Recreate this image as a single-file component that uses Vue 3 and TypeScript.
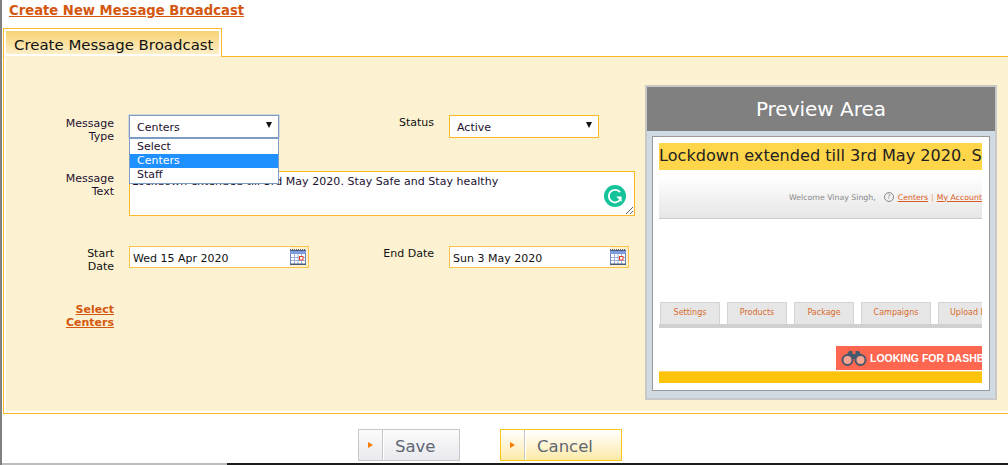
<script setup lang="ts">
const options: string[] = ['Select', 'Centers', 'Staff']
const previewTabs: string[] = ['Settings', 'Products', 'Package', 'Campaigns', 'Upload D']
</script>

<template>
  <div class="page">
    <a class="heading">Create New Message Broadcast</a>
    <div class="tabs">
      <div class="tab">Create Message Broadcast</div>
    </div>
    <section class="panel">
      <div class="form">
        <div class="label row1">Message<br />Type</div>
        <div class="field-wrap">
          <div class="select focus">
            <span>Centers</span>
            <i class="arrow"></i>
          </div>
          <ul class="dropdown">
            <li v-for="o in options" :key="o" :class="{ selected: o === 'Centers' }">{{ o }}</li>
          </ul>
        </div>
        <div class="label status">Status</div>
        <div class="select amber">
          <span>Active</span>
          <i class="arrow"></i>
        </div>

        <div class="label row2">Message<br />Text</div>
        <div class="text-wrap">
          <textarea class="message" readonly>Lockdown extended till 3rd May 2020. Stay Safe and Stay healthy</textarea>
          <svg class="grammarly" viewBox="0 0 22 22" width="22" height="22">
            <circle cx="11" cy="11" r="11" fill="#15c39a" />
            <path d="M16 7.2A6.3 6.3 0 1 0 16.2 14.8" fill="none" stroke="#fff" stroke-width="1.9" />
            <path d="M12.2 11.6h5.4v5.4z" fill="#fff" />
          </svg>
        </div>

        <div class="label row3">Start<br />Date</div>
        <div class="date">
          <span class="date-text">Wed 15 Apr 2020</span>
          <svg class="cal" viewBox="0 0 16 16" width="16" height="16">
            <rect x="0" y="2" width="16" height="14" fill="#fff" />
            <path d="M0 0.5h16" stroke="#555e70" stroke-dasharray="1 1" />
            <rect x="0" y="1" width="16" height="1" fill="#4d5a75" />
            <rect x="0" y="2" width="16" height="3" fill="#7d9be0" />
            <path d="M0.5 5v11M15.5 5v11" stroke="#6f86b8" />
            <path d="M1 8.5h14M1 11.5h14M4.5 5v10M8 5v10M11.5 5v10" stroke="#9db0d6" />
            <rect x="0" y="14.5" width="16" height="1.5" fill="#4d5a75" />
            <rect x="9.5" y="7.5" width="3.5" height="3.5" fill="#fff" stroke="#e2432d" />
          </svg>
        </div>
        <div class="label status row3b">End Date</div>
        <div class="date">
          <span class="date-text">Sun 3 May 2020</span>
          <svg class="cal" viewBox="0 0 16 16" width="16" height="16">
            <rect x="0" y="2" width="16" height="14" fill="#fff" />
            <path d="M0 0.5h16" stroke="#555e70" stroke-dasharray="1 1" />
            <rect x="0" y="1" width="16" height="1" fill="#4d5a75" />
            <rect x="0" y="2" width="16" height="3" fill="#7d9be0" />
            <path d="M0.5 5v11M15.5 5v11" stroke="#6f86b8" />
            <path d="M1 8.5h14M1 11.5h14M4.5 5v10M8 5v10M11.5 5v10" stroke="#9db0d6" />
            <rect x="0" y="14.5" width="16" height="1.5" fill="#4d5a75" />
            <rect x="9.5" y="7.5" width="3.5" height="3.5" fill="#fff" stroke="#e2432d" />
          </svg>
        </div>

        <a class="label link">Select<br />Centers</a>
      </div>

      <aside class="preview">
        <h2 class="preview-title">Preview Area</h2>
        <div class="preview-body">
          <div class="preview-inner">
            <div class="marquee">Lockdown extended till 3rd May 2020. Stay Safe and Stay healthy</div>
            <div class="welcome">
              <span class="welcome-text">Welcome Vinay Singh,</span>
              <span class="help">?</span>
              <a>Centers</a><span class="sep">|</span><a>My Account</a>
            </div>
            <div class="ptabs">
              <span
                v-for="(t, i) in previewTabs"
                :key="t"
                class="ptab"
                :class="{ wide: i === 3, last: i === 4 }"
              >{{ t }}</span>
            </div>
            <div class="promo-row">
              <div class="promo">
                <svg viewBox="0 0 26 16" width="26" height="16">
                  <path d="M5 6 8 1h3.5v5zM21 6l-3-5h-3.500v5z" fill="#44586e" />
                  <rect x="10" y="4" width="6" height="5" fill="#44586e" />
                  <circle cx="6.500" cy="10" r="5" fill="#f7a592" stroke="#44586e" stroke-width="2" />
                  <circle cx="19.500" cy="10" r="5" fill="#f7a592" stroke="#44586e" stroke-width="2" />
                </svg>
                <span>LOOKING FOR DASHBOARD</span>
              </div>
            </div>
            <div class="footer-bar"></div>
          </div>
        </div>
      </aside>
    </section>

    <div class="actions">
      <button class="btn" type="button">
        <span class="btn-icon"><i></i></span><span class="btn-text">Save</span>
      </button>
      <button class="btn active" type="button">
        <span class="btn-icon"><i></i></span><span class="btn-text">Cancel</span>
      </button>
    </div>
    <div class="edge"></div>
  </div>
</template>

<style>
html, body { margin: 0; background: #fff; overflow: hidden; }
</style>

<style scoped>
.page {
  position: relative;
  width: 1008px;
  height: 465px;
  box-sizing: border-box;
  border-left: 2px solid #808080;
  padding: 3px 0 0 1px;
  font-family: "DejaVu Sans", Verdana, sans-serif;
  font-size: 11px;
  color: #111;
  overflow: hidden;
}
.heading {
  display: block;
  margin-left: 6px;
  font-size: 13.2px;
  line-height: 16px;
  font-weight: 700;
  color: #d4570f;
  text-decoration: underline;
}
.tabs {
  display: flex;
  margin-top: 9px;
  height: 29px;
  position: relative;
  z-index: 1;
}
.tab {
  box-sizing: border-box;
  width: 219px;
  height: 29px;
  padding: 6px 0 0 10px;
  border: 1px solid #fbb829;
  border-bottom: 0;
  outline: 2px solid #fff;
  outline-offset: -3px;
  background: linear-gradient(#f8d06c, #fcf2d2);
  font-size: 14.95px;
  line-height: 20px;
  color: #111;
}
.panel {
  box-sizing: border-box;
  display: flex;
  height: 358px;
  margin-top: -1px;
  border: 1px solid #fbb829;
  border-right: 0;
  box-shadow: inset 2px 0 #fff, inset 0 -2px #fff;
  background: #fcf2d2;
  padding: 28px 0 0 1px;
}
.form {
  display: grid;
  grid-template-columns: 109px 180px 110px 186px;
  grid-template-rows: 56px 75px 57px auto;
  column-gap: 15px;
  align-content: start;
  padding-top: 30px;
  width: 640px;
  box-sizing: border-box;
}
.label {
  text-align: right;
  line-height: 13px;
  color: #1c1030;
  padding-top: 2px;
}
.status { color: #111; padding-top: 1px; }
.row2 { padding-top: 1px; }
.row3 { color: #111; padding-top: 1px; }
.field-wrap { position: relative; z-index: 2; width: 150px; }
.select {
  box-sizing: border-box;
  display: flex;
  align-items: center;
  justify-content: space-between;
  height: 23px;
  width: 150px;
  padding: 1px 6px 0 7px;
  background: #fff;
  border: 1px solid #fbb829;
  color: #1c1030;
}
.select.focus { border-color: #7c9cc4; box-shadow: 0 0 0 0.5px #a9bdd8; }
.arrow {
  display: block;
  width: 0;
  height: 0;
  margin-top: -4px;
  border-left: 3.5px solid transparent;
  border-right: 3.5px solid transparent;
  border-top: 6px solid #111;
}
.dropdown {
  position: absolute;
  left: 0;
  top: 23px;
  box-sizing: border-box;
  width: 150px;
  height: 46px;
  margin: 0;
  padding: 1px 0 0;
  list-style: none;
  background: #fff;
  border: 1px solid #7c9cc4;
  line-height: 14px;
  color: #1c1030;
}
.dropdown li { padding-left: 7px; height: 14px; }
.dropdown li.selected { background: #1e90ff; color: #fff; }
.text-wrap { grid-column: 2 / 5; position: relative; height: 45px; }
.message {
  display: block;
  box-sizing: border-box;
  width: 506px;
  height: 45px;
  margin: 0;
  padding: 3px 2px;
  border: 1px solid #fbb829;
  border-radius: 0;
  outline: none;
  background: #fff;
  font: 11px/13px "DejaVu Sans", Verdana, sans-serif;
  letter-spacing: 0.05px;
  color: #1c1030;
}
.grammarly { position: absolute; left: 475px; top: 14px; }
.date {
  box-sizing: border-box;
  display: flex;
  align-items: center;
  justify-content: space-between;
  width: 180px;
  height: 22px;
  padding: 2px 2px 0 3px;
  border: 1px solid #fbc34a;
  background: linear-gradient(90deg, #fff 160px, #fcf2d2 160px);
}
.date-text { color: #111; }
.cal { flex: none; margin-top: -3px; }
.link {
  color: #d4570f;
  font-weight: 700;
  text-decoration: underline;
  grid-column: 1;
  padding-top: 0;
}
.preview {
  box-sizing: border-box;
  width: 352px;
  height: 315px;
  border: 2px solid #c8c8c8;
  background: #d0dae3;
  display: flex;
  flex-direction: column;
}
.preview-title {
  flex: none;
  margin: 0;
  height: 44px;
  background: #808080;
  color: #fff;
  font-size: 20px;
  font-weight: 400;
  line-height: 44px;
  text-align: center;
}
.preview-body { flex: 1; padding: 5px 5px 7px; min-height: 0; }
.preview-inner {
  box-sizing: border-box;
  height: 100%;
  background: #fff;
  border: 1px solid #999;
  padding: 6px 7px 8px 6px;
  display: flex;
  flex-direction: column;
  overflow: hidden;
}
.marquee {
  flex: none;
  height: 27px;
  line-height: 26px;
  font-size: 16.1px;
  white-space: nowrap;
  overflow: hidden;
  background: #ffd549;
  color: #222;
}
.welcome {
  flex: none;
  box-sizing: border-box;
  margin-top: 6px;
  height: 43px;
  display: flex;
  align-items: center;
  justify-content: flex-end;
  gap: 3px;
  border-bottom: 1px solid #ccc;
  background: linear-gradient(#fff, #e6e6e6);
  font-size: 7.8px;
  white-space: nowrap;
  overflow: hidden;
}
.welcome-text { color: #888; margin-right: 5px; }
.help {
  width: 8px;
  height: 8px;
  border: 1px solid #888;
  border-radius: 50%;
  color: #888;
  font-size: 7px;
  line-height: 8px;
  text-align: center;
  margin-right: 1px;
}
.welcome a { color: #dc5a22; text-decoration: underline; }
.sep { color: #ee9a66; }
.ptabs {
  flex: none;
  display: flex;
  gap: 7px;
  margin-top: 83px;
  padding-left: 1px;
  height: 26px;
  box-sizing: border-box;
  border-bottom: 4px solid #d0d0d0;
  overflow: hidden;
}
.ptab {
  flex: none;
  box-sizing: border-box;
  width: 60px;
  height: 22px;
  border: 1px solid #d4d4d4;
  border-bottom: 0;
  background: #e6e6e6;
  color: #d96a2c;
  font-size: 8px;
  line-height: 20px;
  text-align: center;
  white-space: nowrap;
  overflow: hidden;
}
.ptab.wide { width: 70px; }
.ptab.last { width: 70px; text-align: left; padding-left: 11px; }
.promo-row { flex: none; display: flex; justify-content: flex-end; margin-top: 18px; overflow: hidden; }
.promo {
  flex: none;
  box-sizing: border-box;
  width: 146px;
  height: 24px;
  padding-left: 5px;
  background: #fd6750;
  display: flex;
  align-items: center;
  gap: 3px;
  overflow: hidden;
  white-space: nowrap;
  font: 700 10.5px "Liberation Sans", Arial, sans-serif;
  color: #fff;
}
.promo svg { flex: none; }
.footer-bar {
  flex: none;
  height: 12px;
  margin-top: 1px;
  background: #fec40c;
  border-top: 1px solid #fdd56a;
  box-sizing: border-box;
}
.actions {
  display: flex;
  gap: 40px;
  margin-top: 15px;
  margin-left: 355px;
}
.btn {
  display: flex;
  align-items: stretch;
  box-sizing: border-box;
  height: 32px;
  width: 102px;
  padding: 0;
  border: 1px solid #c8c8c8;
  background: linear-gradient(#fcfcfd, #e8e8ee);
  font: 16.5px "DejaVu Sans", Verdana, sans-serif;
  color: #5e6672;
}
.btn.active {
  width: 122px;
  border-color: #fbc61e;
  background: linear-gradient(#fff, #fdeaa8);
}
.btn-icon {
  flex: none;
  width: 24px;
  box-sizing: border-box;
  border-right: 1px solid #c8c8c8;
  box-shadow: 1px 0 #fff;
  display: flex;
  align-items: center;
  justify-content: center;
}
.btn-icon i {
  display: block;
  width: 0;
  height: 0;
  border-top: 3px solid transparent;
  border-bottom: 3px solid transparent;
  border-left: 5px solid #f57c00;
}
.btn-text { padding: 1px 0 0 12px; line-height: 32px; }
.edge {
  position: absolute;
  left: -2px;
  right: 0;
  bottom: 0;
  height: 2px;
  background: linear-gradient(90deg, #bdbdbd 227px, #1c1c1c 227px);
}
</style>
